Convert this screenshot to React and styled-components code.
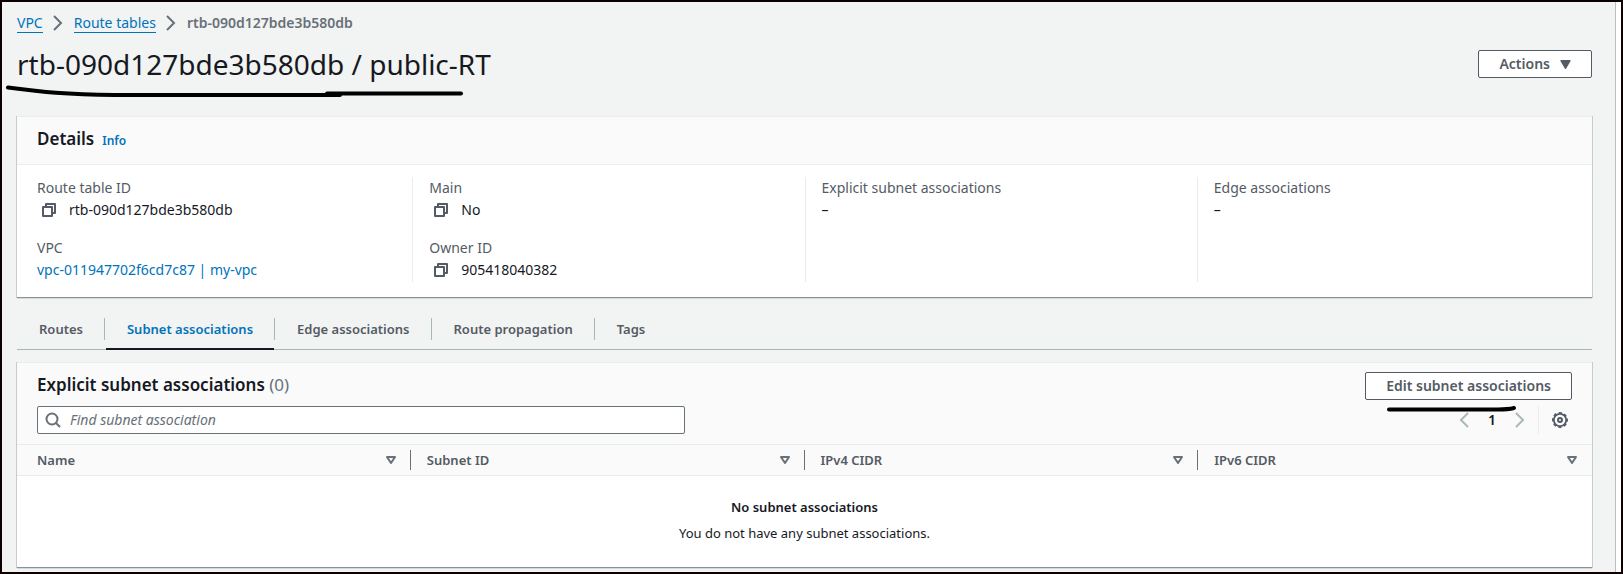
import React from 'react';
import styled, { createGlobalStyle } from 'styled-components';

const Global = createGlobalStyle`
  * { box-sizing: border-box; }
  body { margin: 0; background: #f2f3f3; }
  body, button, input {
    font-family: "Noto Sans", "Open Sans", sans-serif;
    font-size: 14px;
    line-height: 22px;
    color: #16191f;
  }
  h1, h2, p, dl, dd, ol, ul { margin: 0; padding: 0; }
`;

const Frame = styled.div`
  display: flex;
  min-height: 100vh;
  border: 2px solid #0c0000;
  background: #f2f3f3;
`;

const Main = styled.main`
  flex: 1;
  min-width: 0;
  padding: 10px 23px 4px 15px;
`;

const SideRail = styled.div`
  width: 6px;
  background: #fff;
  border-left: 1px solid #b9c0c5;
`;

const Crumbs = styled.ol`
  display: flex;
  align-items: center;
  gap: 11px;
  height: 22px;
  list-style: none;
`;

const Crumb = styled.li`
  display: flex;
  align-items: center;
  gap: 10px;
  color: #687078;
  font-weight: ${(p) => (p.$current ? 600 : 400)};
`;

const CrumbLink = styled.a`
  color: #0073bb;
  line-height: 18px;
  text-decoration: none;
  border-bottom: 1px solid #0073bb;
`;

const TitleBar = styled.header`
  display: flex;
  align-items: center;
  justify-content: space-between;
  height: 60px;
`;

const Title = styled.h1`
  position: relative;
  font-size: 28px;
  line-height: 36px;
  font-weight: 400;
`;

const TitleStroke = styled.svg`
  position: absolute;
  left: -12px;
  top: 37px;
  pointer-events: none;
`;

const Button = styled.button`
  position: relative;
  display: flex;
  align-items: center;
  gap: 10px;
  height: 28px;
  padding: 0 20px;
  border: 1px solid #545b64;
  border-radius: 2px;
  background: #fff;
  color: #545b64;
  font-weight: 600;
`;

const ButtonStroke = styled.svg`
  position: absolute;
  left: 20px;
  top: 31px;
  pointer-events: none;
`;

const Card = styled.section`
  margin-top: ${(p) => p.$top}px;
  background: #fff;
  border-top: 1px solid #eaeded;
  box-shadow: 0 1px 0 0 #d5dbdb, 1px 0 0 0 #c5ccce, -1px 0 0 0 #c5ccce;
  border-bottom: 1px solid #879196;
`;

const CardHeader = styled.div`
  display: flex;
  align-items: baseline;
  gap: 8px;
  height: 48px;
  padding: 9px 20px;
  background: #fafafa;
  border-bottom: 1px solid #eaeded;
`;

const Heading = styled.h2`
  font-size: 17px;
  line-height: 26px;
  font-weight: 600;
`;

const Count = styled.span`
  color: #687078;
  font-weight: 400;
`;

const InfoLink = styled.a`
  color: #0073bb;
  font-size: 12px;
  font-weight: 600;
  text-decoration: none;
`;

const Columns = styled.div`
  display: grid;
  grid-template-columns: repeat(4, 1fr);
  padding: 12px 3px 15px;
`;

const Column = styled.dl`
  min-height: 105px;
  padding: 0 16px;
  border-left: 1px solid transparent;
  & + & { border-left-color: #eaeded; }
`;

const Pair = styled.div`
  & + & { margin-top: 16px; }
`;

const Label = styled.dt`
  color: #545b64;
`;

const Value = styled.dd`
  display: flex;
  align-items: center;
  height: 22px;
`;

const CopyButton = styled.button`
  display: flex;
  margin: 0 12px 0 4px;
  padding: 0;
  border: 0;
  background: none;
`;

const TextLink = styled.a`
  color: #0073bb;
  text-decoration: none;
`;

const Tabs = styled.div`
  display: flex;
  margin-top: 14px;
  height: 38px;
  border-bottom: 1px solid #aab7b8;
`;

const Tab = styled.button`
  position: relative;
  height: 38px;
  padding: 0 22px 4px;
  border: 0;
  background: none;
  color: ${(p) => (p.$active ? '#0073bb' : '#545b64')};
  font-size: 13px;
  font-weight: 600;

  &:not(:last-child)::before {
    content: '';
    position: absolute;
    right: 0;
    top: 6px;
    height: 22px;
    border-right: 1px solid #aab7b8;
  }

  &::after {
    content: '';
    position: absolute;
    left: 1px;
    right: 1px;
    bottom: 0;
    height: 2px;
    background: ${(p) => (p.$active ? '#16191f' : 'transparent')};
  }
`;

const TableHeader = styled.div`
  display: grid;
  gap: 6px;
  padding: 9px 20px 10px;
  background: #fafafa;
`;

const HeaderRow = styled.div`
  display: flex;
  justify-content: space-between;
  height: 28px;
`;

const Search = styled.label`
  display: flex;
  align-items: center;
  gap: 9px;
  width: 648px;
  max-width: 70%;
  height: 28px;
  padding: 0 7px;
  border: 1px solid #687078;
  border-radius: 2px;
  background: #fff;
`;

const SearchInput = styled.input`
  flex: 1;
  min-width: 0;
  height: 22px;
  padding: 0;
  border: 0;
  outline: 0;
  background: none;
  &::placeholder { color: #687078; font-style: italic; opacity: 1; }
`;

const Pager = styled.div`
  display: flex;
  align-items: center;
  height: 28px;
`;

const PageNumber = styled.button`
  width: 46px;
  padding: 0;
  border: 0;
  background: none;
  font-weight: 600;
`;

const IconButton = styled.button`
  display: flex;
  padding: 0;
  border: 0;
  background: none;
`;

const Settings = styled.div`
  display: flex;
  align-items: center;
  height: 28px;
  margin-left: 13px;
  padding: 0 4px 0 13px;
  border-left: 1px solid #eaeded;
`;

const Table = styled.table`
  width: 100%;
  table-layout: fixed;
  border-collapse: collapse;
`;

const HeadCell = styled.th`
  height: 31px;
  padding: 0;
  background: #fafafa;
  border-top: 1px solid #eaeded;
  border-bottom: 1px solid #eaeded;
  color: #545b64;
  font-size: 13px;
  font-weight: 600;
  text-align: left;
`;

const HeadInner = styled.div`
  display: flex;
  align-items: center;
  justify-content: space-between;
  height: 20px;
  padding: 0 14px 0 16px;
  border-right: 1px solid #687078;
  ${HeadCell}:first-child & { padding-left: 20px; }
  ${HeadCell}:last-child & { border-right-color: transparent; }
`;

const Empty = styled.td`
  height: 91px;
  padding: 0 0 2px;
  font-size: 13px;
  text-align: center;
`;

const EmptyTitle = styled.p`
  margin-bottom: 4px;
  font-weight: 600;
`;

const Chevron = ({ left, color = '#687078' }) => (
  <svg width="10" height="16" viewBox="0 0 10 16" fill="none" stroke={color} strokeWidth="2" aria-hidden="true">
    <path d={left ? 'M9 1 2 8l7 7' : 'M1 1l7 7-7 7'} />
  </svg>
);

const CopyIcon = () => (
  <svg width="16" height="16" viewBox="0 0 16 16" fill="none" stroke="#545b64" strokeWidth="2" strokeLinejoin="round" aria-hidden="true">
    <path d="M2 5h9v9H2z" />
    <path d="M5 5V2h9v9h-3" />
  </svg>
);

const SearchIcon = () => (
  <svg width="16" height="16" viewBox="0 0 16 16" fill="none" stroke="#687078" strokeWidth="2" aria-hidden="true">
    <circle cx="7" cy="7" r="5.5" />
    <path d="M11 11l4 4" />
  </svg>
);

const SortIcon = () => (
  <svg width="10" height="8" viewBox="0 0 10 8" fill="none" stroke="#687078" strokeWidth="2" strokeLinejoin="round" aria-hidden="true">
    <path d="M1 1h8L5 7z" />
  </svg>
);

const CaretIcon = () => (
  <svg width="11" height="9" viewBox="0 0 11 9" fill="#545b64" aria-hidden="true">
    <path d="M1 0h9q1 0 .6.9L6.2 8.4q-.7 1-1.4 0L.4.9Q0 0 1 0z" />
  </svg>
);

const GearIcon = () => (
  <svg width="16" height="16" viewBox="0 0 16 16" fill="none" stroke="#545b64" aria-hidden="true">
    <circle cx="8" cy="8" r="6.2" strokeWidth="1.8" />
    <circle cx="8" cy="8" r="7.2" strokeWidth="1.6" strokeDasharray="3.2 2.455" strokeDashoffset="1.6" />
    <circle cx="8" cy="8" r="2" strokeWidth="2" />
  </svg>
);

const details = [
  [
    { label: 'Route table ID', value: 'rtb-090d127bde3b580db', copy: true },
    { label: 'VPC', value: 'vpc-011947702f6cd7c87 | my-vpc', link: true },
  ],
  [
    { label: 'Main', value: 'No', copy: true },
    { label: 'Owner ID', value: '905418040382', copy: true },
  ],
  [{ label: 'Explicit subnet associations', value: '–' }],
  [{ label: 'Edge associations', value: '–' }],
];

const tabs = ['Routes', 'Subnet associations', 'Edge associations', 'Route propagation', 'Tags'];
const columns = ['Name', 'Subnet ID', 'IPv4 CIDR', 'IPv6 CIDR'];

export default function App() {
  return (
    <>
      <Global />
      <Frame>
        <Main>
          <nav aria-label="Breadcrumbs">
            <Crumbs>
              <Crumb><CrumbLink href="#vpc">VPC</CrumbLink><Chevron /></Crumb>
              <Crumb><CrumbLink href="#route-tables">Route tables</CrumbLink><Chevron /></Crumb>
              <Crumb $current aria-current="page">rtb-090d127bde3b580db</Crumb>
            </Crumbs>
          </nav>

          <TitleBar>
            <Title>
              rtb-090d127bde3b580db / public-RT
              <TitleStroke width="462" height="16" viewBox="0 0 462 16" fill="none" stroke="#000" strokeLinecap="round" aria-hidden="true">
                <path d="M3 4.500C38 9 60 11.500 110 12H335" strokeWidth="4" />
                <path d="M322 10.500H456" strokeWidth="4" />
              </TitleStroke>
            </Title>
            <Button type="button">Actions <CaretIcon /></Button>
          </TitleBar>

          <Card $top={22}>
            <CardHeader>
              <Heading>Details</Heading>
              <InfoLink href="#info">Info</InfoLink>
            </CardHeader>
            <Columns>
              {details.map((pairs) => (
                <Column key={pairs[0].label}>
                  {pairs.map(({ label, value, copy, link }) => (
                    <Pair key={label}>
                      <Label>{label}</Label>
                      <Value>
                        {copy && <CopyButton type="button" aria-label={`Copy ${label}`}><CopyIcon /></CopyButton>}
                        {link ? <TextLink href="#my-vpc">{value}</TextLink> : value}
                      </Value>
                    </Pair>
                  ))}
                </Column>
              ))}
            </Columns>
          </Card>

          <Tabs role="tablist">
            {tabs.map((name) => (
              <Tab key={name} type="button" role="tab" $active={name === 'Subnet associations'} aria-selected={name === 'Subnet associations'}>
                {name}
              </Tab>
            ))}
          </Tabs>

          <Card $top={12}>
            <TableHeader>
              <HeaderRow>
                <Heading>Explicit subnet associations <Count>(0)</Count></Heading>
                <Button type="button">
                  Edit subnet associations
                  <ButtonStroke width="134" height="10" viewBox="0 0 134 10" fill="none" stroke="#000" strokeWidth="4" strokeLinecap="round" aria-hidden="true">
                    <path d="M3 5.500H112Q122 5.500 128 4" />
                  </ButtonStroke>
                </Button>
              </HeaderRow>
              <HeaderRow>
                <Search>
                  <SearchIcon />
                  <SearchInput type="text" placeholder="Find subnet association" aria-label="Find subnet association" />
                </Search>
                <Pager>
                  <IconButton type="button" aria-label="Previous page"><Chevron left color="#aab7b8" /></IconButton>
                  <PageNumber type="button">1</PageNumber>
                  <IconButton type="button" aria-label="Next page"><Chevron color="#aab7b8" /></IconButton>
                  <Settings>
                    <IconButton type="button" aria-label="Preferences"><GearIcon /></IconButton>
                  </Settings>
                </Pager>
              </HeaderRow>
            </TableHeader>
            <Table>
              <thead>
                <tr>
                  {columns.map((name) => (
                    <HeadCell key={name} scope="col">
                      <HeadInner>{name}<SortIcon /></HeadInner>
                    </HeadCell>
                  ))}
                </tr>
              </thead>
              <tbody>
                <tr>
                  <Empty colSpan={4}>
                    <EmptyTitle>No subnet associations</EmptyTitle>
                    <p>You do not have any subnet associations.</p>
                  </Empty>
                </tr>
              </tbody>
            </Table>
          </Card>
        </Main>
        <SideRail />
      </Frame>
    </>
  );
}
